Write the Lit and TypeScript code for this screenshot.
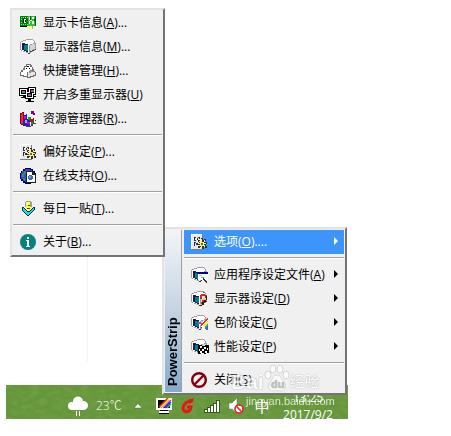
import { LitElement, html, svg, css, nothing } from "lit";
import type { TemplateResult, SVGTemplateResult } from "lit";
import { customElement, property } from "lit/decorators.js";

const monitor = svg`
  <path fill="#a0a0a0" d="M0 3h1V2h2V1h3V0h7v1h1v1h1v2h1v6h-1v2h-2v1h-2v1h-1v1H8v-1H6v-1H3v-1H1v-1H0z"/>
  <path fill="#fff" d="M1 3h2V2h3V1h7v1h1v2L9 6V14L1 11z"/>
  <path fill="#d4d4d4" d="M10 6h2V5h3v5h-2v2h-3z"/>
  <path fill="#202020" d="M2 4h3v1h3v8H6v-1H4v-1H2z"/>
  <path fill="#008088" d="M4 5h1v1h3v6H6v-1H4z"/>
  <path fill="#101080" d="M3 5h1v5H3zM4 5h2v1H4z"/>
  <path fill="#404040" d="M15 10h1v1h-2v1h-2v1h-2v2H8v-1h2v-2h2v-1h3z"/>`;

const gear = svg`
  <path fill="#e8e8e8" d="M0 0H11V15H0z"/>
  <path fill="#fff" d="M0 0H11V1H1V15H0z"/>
  <path fill="#808080" d="M11 1h1v4h-1zM0 15h12v1H0z"/>
  <path fill="#303030" d="M3 3h2v1H4v2h1v1H3zM7 3h2v2H8V4H7zM3 8h2v1H4v3H3zM6 4h1v2H6zM5 9h1v2H5z"/>
  <path fill="#303030" d="M10 4h2v2h1V5h2v2h-1v1h2v2h-1v2h1v2h-2v-1h-1v2h-2v-2H9v1H7v-2h1v-1H6V9h2V8H7V6h2v1h1z"/>
  <path fill="#ffee90" d="M10 5h1v3h2V6h1v2h-1v1h2v1h-2v1h1v2h-1v-1h-2v2h-1v-2H8v-1h1v-1H7V9h2V8H8V7h2z"/>
  <path fill="#606060" d="M10 9h2v2h-2z"/>`;

const art: Record<string, SVGTemplateResult> = {
  card: svg`
    <path fill="#000" d="M0 1h11v11H0z"/>
    <path fill="#008000" d="M0 1h10v10H0z"/>
    <path fill="#60ff90" d="M1 2h1v1H1zM3 2h1v1H3zM5 2h1v1H5zM7 2h1v1H7zM1 9h1v1H1zM3 9h1v1H3zM5 9h1v1H5zM7 9h1v1H7zM1 4h1v1H1zM1 7h1v1H1z"/>
    <path fill="#000" d="M3 4h3v4H3z"/><path fill="#fff" d="M4 4h2v1H4zM4 7h2v1H4zM4 5h1v2H4z"/>
    <path fill="#30c040" d="M8 1h7v10H8z"/>
    <path fill="#fff" d="M9 2h1v3H9zM12 2h2v2h-2zM9 6h1v3H9zM12 6h2v3h-2zM10 5h2v1h-2z"/>
    <path fill="#006000" d="M10 1h1v4h-1zM14 4h1v2h-1zM15 1h1v10h-1z"/>
    <path fill="#ffff80" d="M7 11h5v3H7z"/><path fill="#b0b040" d="M12 11h1v3h-1z"/>`,
  monitor,
  keycap: svg`
    <path fill="#707070" d="M6 1h5v1h1v2h1v2h1v2h1v1h1v4h-2v1h-3v1H7v-1H3v-1H0V9h1V7h2V5h1V3h2z"/>
    <path fill="#fff" d="M7 2h3v2h2v2H9v3H7v4H4v-1H1V9h2V7h2V4h2z"/>
    <path fill="#e4e4e4" d="M9 6h3v2h2v1h1v3h-2v1h-3v1H8V9h1z"/>
    <path fill="#909090" d="M10 7h2v1h2v1h-3v1H9V8h1z"/>
    <path fill="#000" d="M7 3h2v1H7zM6 5h1v1H6zM9 5h1v1H9z"/>`,
  screens: svg`
    <path fill="#000" d="M-1 1h9v8h-9zM1 10h6v1H1zM3 9h2v1H3zM8 0h8v8H8zM10 9h6v1h-6zM5 4h9v8H5zM8 12h3v2H8zM6 14h8v1H6z"/>
    <path fill="#fff" d="M0 2h7v6H0zM9 1h6v6H9zM6 5h7v6H6z"/>
    <path fill="#000" d="M1 3h5v4H1zM10 2h4v4h-4zM7 6h5v4H7z"/>
    <path fill="#f020d0" d="M2 4h3v1H2zM11 3h2v2h-2zM8 7h3v1H8z"/>
    <path fill="#00b0c0" d="M2 5h1v1H2zM8 8h1v1H8z"/>
    <path fill="#00e000" d="M13 3h1v2h-1zM9 8h2v1H9zM3 5h2v1H3z"/>`,
  explorer: svg`
    <path fill="#800020" d="M0 2h2V1h2v12h1v2H3v-1H1v-1H0z"/>
    <path fill="#ff2030" d="M1 3h1V2h1v11H1z"/>
    <path fill="#2020d0" d="M4 4h2V3h1v5h3v7H5v-1H3V9h1z"/>
    <path fill="#e000c0" d="M4 5h2v3H4zM7 11h3v2H7z"/>
    <path fill="#60d0e0" d="M5 9h2v3H5z"/>
    <path fill="#00b000" d="M8 6h3v3H8zM11 10h2v3h-2z"/>
    <path fill="#e00000" d="M10 8h3v3h-3z"/>
    <path fill="#800080" d="M11 0h3v2h1v2h-2V3h-2z"/>
    <path fill="#404040" d="M13 7h1v5h2v1h-3v2h-2v1H6v-1h5v-2h2zM15 9h1v1h-1z"/>`,
  gear,
  support: svg`
    <path fill="#000060" d="M5 0h6v1h2v2h2v2h1v6h-1v2h-2v2h-2v1H5v-1H3v-2H1v-2H0V5h1V3h2V1h2z"/>
    <path fill="#4040e0" d="M5 1h5v1h2v2h2v7h-1v2h-2v1H5v-1H3v-2H1V5h1V3h3z"/>
    <path fill="#20a040" d="M4 3h3v2H5v2H4v2H2V6h1V5h1zM3 10h2v3H4v-1H3z"/>
    <path fill="#202020" d="M6 3h7v1h1v1h1v1h1v9H6z"/><path fill="#fffff0" d="M7 4h5v3h3v7H7z"/>
    <path fill="#4060e0" d="M9 7h3v1h1v3h-1v1H9v-1H8V8h1z"/>
    <path fill="#50c070" d="M9 8h2v2H9z"/>`,
  daily: svg`
    <path fill="#a0a080" d="M6 0h5v1h1v5h-1v5H6V6H5V1h1z"/>
    <path fill="#ffff50" d="M6 1h4v5h1v5H6z"/><path fill="#fff" d="M7 2h1v2H7z"/>
    <path fill="#404000" d="M8 4h2v1H8zM7 7h3v1H7z"/>
    <path fill="#103030" d="M2 6h2v1h1v1h1v1h1v1h3V9h1V8h1V7h1V6h2v3h-1v1h-1v1h-1v1h-1v1h-1v1H9v1H7v-1H6v-1H5v-1H4v-1H3v-1H2z"/>
    <path fill="#20d8e8" d="M3 7h1v1h1v1h1v1h1v1h3v-1h1V9h1V8h1V7h1v2h-1v1h-1v1h-1v1h-1v1H9v1H7v-1H6v-1H5v-1H4v-1H3z"/>`,
  about: svg`
    <circle cx="8" cy="8" r="8" fill="#088080" shape-rendering="auto"/>
    <path fill="#fff" d="M7 3h2v2H7zM6 6h3v6h1v1H6v-1h1V7H6z"/>`,
  profile: svg`${monitor}
    <path fill="#000080" d="M6 5h11v2H6z"/><path fill="#fff" d="M7 7h10v6H7z"/>
    <path fill="#c0c0c0" d="M8 8h3v1H8z"/>
    <path fill="#40c0a0" d="M10 10h3v1h-3z"/>
    <path fill="#303030" d="M12 11h1v1h1v1h1v1h1v2h-1v-1h-1v-1h-1v-1h-1zM10 13h1v1h-1v1H9v-1h1z"/>`,
  display: svg`${monitor}
    <path fill="#e02020" d="M9 4h1V3h4v1h2v3h-2V5h-3v3H9zM11 9h3v2h-2v2h-2v-2h1z"/>
    <path fill="#fff" d="M11 5h2v3h-2z"/><path fill="#f0d820" d="M12 7h2v2h-2zM9 13h2v2H9z"/>
    <path fill="#301010" d="M15 5h1v4h-1v2h-2v3h-2v1H9v-1h2v-3h2V9h2z"/>
    <path fill="#00a020" d="M12 1h2v1h-2z"/>`,
  color: svg`${monitor}
    <path fill="#fff" d="M9 9 17 3V14L12 15z"/>
    <path fill="#c040c0" d="M7 7h3v2H7z"/><path fill="#e83030" d="M9 10 17 3V5L10 11zM10 8h2v2h-2z"/>
    <path fill="#ffe840" d="M12 10 17 6V9L13 12z"/>
    <path fill="#20c060" d="M13 12 17 9V11L14 13z"/>
    <path fill="#4060e0" d="M14 13 17 11V15H15z"/>`,
  speed: svg`${monitor}
    <path fill="#000" d="M7 6h4v1h3V6h4v8h-3v1h-2v-1H9v1H7z"/>
    <path fill="#fff" d="M9 7h2v2H9zM13 8h2v2h-2zM11 10h2v2h-2zM8 10h1v2H8zM16 9h1v2h-1zM9 12h2v2H9zM14 12h2v2h-2z"/>`,
  close: svg`
    <g shape-rendering="auto" fill="none" stroke="#800010" stroke-width="2.400">
      <circle cx="8" cy="8" r="6.800"/><path d="M3.500 12.500 12.500 3.500"/>
    </g>`,
  tray: svg`
    <path fill="#fff" d="M0 0h16v12H0z"/><path fill="#000" d="M2 2h12v8H2zM4 12h8v1H4z"/>
    <path fill="#fff" d="M3 13h10v2H3z"/><path fill="#000" d="M3 15h10v1H3z"/>
    <g stroke-width="1.500" shape-rendering="auto">
      <path stroke="#e02020" d="M3 9 12 0"/><path stroke="#ffe020" d="M4 10 14 0"/>
      <path stroke="#fff" d="M6 10 15 1"/><path stroke="#d020d0" d="M7 10 15 2"/>
      <path stroke="#2040ff" d="M9 10 15 4"/><path stroke="#20d040" d="M11 10 15 6"/>
    </g>`,
};

const icon = (name: string) =>
  html`<svg class="icon" viewBox="0 0 16 16" shape-rendering="crispEdges" aria-hidden="true">${art[name]}</svg>`;

interface Item {
  icon: string;
  text: string;
  key: string;
  tail?: string;
  sub?: boolean;
  active?: boolean;
}

const optionItems: (Item | null)[] = [
  { icon: "card", text: "显示卡信息", key: "A", tail: "..." },
  { icon: "monitor", text: "显示器信息", key: "M", tail: "..." },
  { icon: "keycap", text: "快捷键管理", key: "H", tail: "..." },
  { icon: "screens", text: "开启多重显示器", key: "U" },
  { icon: "explorer", text: "资源管理器", key: "R", tail: "..." },
  null,
  { icon: "gear", text: "偏好设定", key: "P", tail: "..." },
  { icon: "support", text: "在线支持", key: "O", tail: "..." },
  null,
  { icon: "daily", text: "每日一贴", key: "T", tail: "..." },
  null,
  { icon: "about", text: "关于", key: "B", tail: "..." },
];

const mainItems: (Item | null)[] = [
  { icon: "gear", text: "选项", key: "O", tail: "....", sub: true, active: true },
  null,
  { icon: "profile", text: "应用程序设定文件", key: "A", sub: true },
  { icon: "display", text: "显示器设定", key: "D", sub: true },
  { icon: "color", text: "色阶设定", key: "C", sub: true },
  { icon: "speed", text: "性能设定", key: "P", sub: true },
  null,
  { icon: "close", text: "关闭", key: "S" },
];

@customElement("popup-menu")
export class PopupMenu extends LitElement {
  @property({ attribute: false }) items: (Item | null)[] = [];
  @property() brand = "";

  static styles = css`
    :host {
      display: flex;
      box-sizing: border-box;
      padding: 1px;
      background: #f0f0f0;
      border: 2px solid;
      border-color: #e3e3e3 #747474 #747474 #e3e3e3;
      font: 12px/24px "Open Sans", "Noto Sans CJK SC", sans-serif;
      color: #000;
    }
    .brand {
      box-sizing: border-box;
      width: 17px;
      padding-top: 6px;
      border-left: 1px solid #a0a0a0;
      background: linear-gradient(to bottom, #86a9cb, #c9d7e4 55%, #f2f5f8);
      font: bold 13px/16px "Liberation Sans", sans-serif;
      writing-mode: vertical-rl;
      transform: rotate(180deg);
    }
    .list {
      flex: 1;
      min-width: 0;
    }
    .brand + .list {
      margin-left: 2px;
    }
    .item {
      display: flex;
      align-items: center;
      width: 100%;
      height: 24px;
      padding: 0 6px 0 7px;
      border: 0;
      background: none;
      color: inherit;
      font: inherit;
      text-align: left;
      white-space: nowrap;
    }
    .active {
      background: #3d95fb;
      color: #fff;
    }
    .label {
      flex: 1;
      margin-left: 7px;
      line-height: 24px;
    }
    .label u {
      text-underline-offset: 1px;
    }
    .icon {
      width: 16px;
      height: 16px;
      flex: none;
      overflow: visible;
    }
    .arrow {
      width: 4px;
      height: 8px;
      margin-bottom: 2px;
      fill: currentColor;
    }
    hr {
      height: 1px;
      margin: 3px 0 4px;
      border: 0;
      border-top: 1px solid #a0a0a0;
      background: #fff;
    }
  `;

  private row(item: Item | null): TemplateResult {
    if (!item) return html`<hr />`;
    return html`<button class="item ${item.active ? "active" : ""}" role="menuitem">
      ${icon(item.icon)}
      <span class="label">${item.text}(<u>${item.key}</u>)${item.tail ?? ""}</span>
      ${item.sub
        ? html`<svg class="arrow" viewBox="0 0 4 8" aria-hidden="true"><path d="M0 0 4 4 0 8z" /></svg>`
        : nothing}
    </button>`;
  }

  render() {
    return html`
      ${this.brand ? html`<div class="brand">${this.brand}</div>` : nothing}
      <div class="list" role="menu">${this.items.map((i) => this.row(i))}</div>
    `;
  }
}

@customElement("app-root")
export class AppRoot extends LitElement {
  static styles = css`
    :host {
      display: flex;
      flex-direction: column;
      justify-content: flex-end;
      box-sizing: border-box;
      position: relative;
      min-height: 100vh;
      padding: 8px 103px 17px 6px;
      overflow: hidden;
      background: #fff;
      font-family: "Open Sans", "Noto Sans CJK SC", sans-serif;
    }
    .pane {
      width: 81px;
      height: 105px;
      margin-bottom: 23px;
      border-right: 1px solid #f4f4f4;
    }
    .taskbar {
      display: flex;
      align-items: center;
      gap: 8px;
      position: relative;
      height: 34px;
      padding: 7px 10px 0 62px;
      box-sizing: border-box;
      overflow: hidden;
      background: #64963a;
      color: #fff;
      font-size: 12px;
      line-height: 17px;
    }
    .grass {
      position: absolute;
      inset: 0;
      width: 100%;
      height: 100%;
    }
    .taskbar > :not(.grass) {
      position: relative;
      flex: none;
    }
    .taskbar button {
      display: block;
      width: 16px;
      height: 16px;
      padding: 0;
      border: 0;
      background: none;
      color: inherit;
    }
    .taskbar .wide {
      width: 20px;
      height: 20px;
    }
    .taskbar .ime {
      width: 20px;
      height: 20px;
      font: 15px/18px "Noto Sans CJK SC", sans-serif;
    }
    svg {
      display: block;
      width: 100%;
      height: 100%;
    }
    .temp {
      width: 28px;
      font-weight: 300;
      white-space: nowrap;
    }
    .clock {
      width: 56px;
      text-align: center;
    }
    .main-menu {
      position: absolute;
      left: 162px;
      bottom: 41px;
      width: 185px;
    }
    .options-menu {
      position: absolute;
      left: 10px;
      bottom: 179px;
      width: 155px;
    }
    .mark {
      position: absolute;
      left: 231px;
      bottom: 28px;
      width: 106px;
      color: #fff;
      opacity: 0.75;
      text-shadow: 0 0 1px #a0a0a0, 0 0 2px #b4b4b4;
      pointer-events: none;
    }
    .logo {
      display: flex;
      align-items: center;
      height: 27px;
      font: bold 21px/27px "Liberation Sans", "Noto Sans CJK SC", sans-serif;
    }
    .logo .paw {
      width: 26px;
      height: 28px;
      flex: none;
      margin-bottom: 8px;
    }
    .logo .cn {
      font-size: 15px;
      font-weight: 400;
    }
    .site {
      padding-left: 15px;
      font: 11px/13px "Liberation Sans", sans-serif;
      text-shadow: none;
    }
  `;

  render() {
    return html`
      <div class="pane"></div>
      <footer class="taskbar">
        <svg class="grass" aria-hidden="true">
          <filter id="blades">
            <feTurbulence type="fractalNoise" baseFrequency="0.12 0.2" numOctaves="3" seed="4" />
            <feColorMatrix values="0 0 0 0 0.2  0 0 0 0 0.36  0 0 0 0 0.08  1.200 0 0 0 -0.400" />
          </filter>
          <rect width="100%" height="100%" filter="url(#blades)" />
        </svg>
        <button class="wide" aria-label="天气">
          <svg viewBox="0 0 20 20">
            <path fill="#fff" d="M4 14a4 4 0 0 1 0-8h1a5 5 0 0 1 10-1 4.500 4.500 0 1 1 1 9z" />
            <path stroke="#fff" d="M8.500 15v5M11.500 15v5" />
          </svg>
        </button>
        <span class="temp">23℃</span>
        <button aria-label="显示隐藏的图标">
          <svg viewBox="0 0 16 16"><path fill="#fff" stroke="#416425" stroke-width=".5" d="M2 10 6 5.500 10 10z" /></svg>
        </button>
        <button aria-label="PowerStrip">${icon("tray")}</button>
        <button aria-label="G">
          <svg viewBox="0 0 16 16">
            <path
              fill="none"
              stroke="#e81418"
              stroke-width="3"
              d="M12 3.500C8 2 3.500 6 3 10c0 5 7 5 8-1H7"
            />
            <path fill="#e81418" d="M9 1h3l2-1-1 4-4 2z" />
          </svg>
        </button>
        <button aria-label="网络">
          <svg viewBox="0 0 16 16" shape-rendering="crispEdges">
            <path fill="#38561f" d="M0 11h3V9h3V7h3V5h3V2h4v13H0z" />
            <path fill="#fff" d="M1 12h2v2H1zM4 10h2v4H4zM7 8h2v6H7zM10 6h2v8h-2zM13 3h2v11h-2z" />
          </svg>
        </button>
        <button aria-label="音量">
          <svg viewBox="0 0 16 16">
            <path fill="#fff" stroke="#777" stroke-width=".5" d="M1 5h3l5-5v15l-5-4H1z" />
            <circle cx="11" cy="11" r="4" fill="#fff" stroke="#e02828" stroke-width="1.600" />
            <path stroke="#e02828" stroke-width="1.600" d="m8 8 6 6" />
          </svg>
        </button>
        <button class="ime" aria-label="输入法">中</button>
        <time class="clock">13:25 2017/9/2</time>
      </footer>
      <popup-menu class="main-menu" brand="PowerStrip" .items=${mainItems}></popup-menu>
      <popup-menu class="options-menu" .items=${optionItems}></popup-menu>
      <div class="mark">
        <div class="logo">
          <span>Bai</span>
          <svg class="paw" viewBox="0 0 26 28" aria-hidden="true">
            <g fill="#fff" stroke="#b8b8b8" stroke-width=".7">
              <ellipse cx="4" cy="11" rx="3" ry="4" />
              <ellipse cx="9" cy="5" rx="3" ry="4" />
              <ellipse cx="16" cy="5" rx="3" ry="4" />
              <ellipse cx="22" cy="11" rx="3" ry="4" />
              <path d="M13 11c4 0 4 4 7 7 3 4 1 9-3 9-3 0-5-1-8 0-4 0-6-5-3-9 3-3 3-7 7-7z" />
            </g>
            <text x="7" y="24" font-size="11" font-family="Liberation Sans" font-weight="bold" fill="#b0b0b0">du</text>
          </svg>
          <span class="cn">经验</span>
        </div>
        <div class="site">jingyan.baidu.com</div>
      </div>
    `;
  }
}
